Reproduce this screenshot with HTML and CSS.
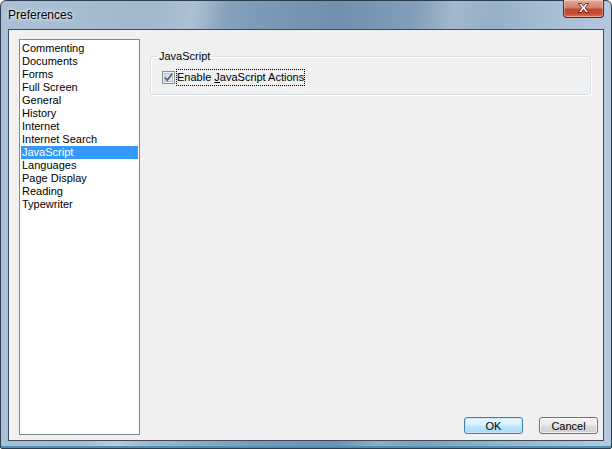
FILE: index.html
```html
<!DOCTYPE html>
<html>
<head>
<meta charset="utf-8">
<link rel="stylesheet" href="styles.css">
</head>
<body>
<div class="window">
  <div class="titlebar">
    <span class="title">Preferences</span>
    <div class="close">
      <svg width="41" height="18" viewBox="0 0 41 18">
        <path d="M15.5 4.5 L18.5 4.5 L20.5 7.2 L22.5 4.5 L25.5 4.5 L22.2 8.8 L25.8 13.5 L22.8 13.5 L20.5 10.4 L18.2 13.5 L15.2 13.5 L18.8 8.8 Z" fill="#ffffff" stroke="#5a1a12" stroke-width="0.9"/>
      </svg>
    </div>
  </div>
  <div class="client">
    <ul class="list">
      <li>Commenting</li>
      <li>Documents</li>
      <li>Forms</li>
      <li>Full Screen</li>
      <li>General</li>
      <li>History</li>
      <li>Internet</li>
      <li>Internet Search</li>
      <li class="sel">JavaScript</li>
      <li>Languages</li>
      <li>Page Display</li>
      <li>Reading</li>
      <li>Typewriter</li>
    </ul>
    <div class="pane">
      <fieldset class="group">
        <legend>JavaScript</legend>
        <div class="check-row">
          <span class="box">
            <svg width="13" height="13" viewBox="0 0 13 13">
              <rect x="0.5" y="0.5" width="12" height="12" fill="#f4f4f4" stroke="#8e8f8f"/>
              <rect x="2.5" y="2.5" width="8" height="8" fill="#dfe3e8" stroke="#b9c1cc"/>
              <path d="M3 6.5 L5.3 9.3 L10 2.8" fill="none" stroke="#3f5b85" stroke-width="1.6"/>
            </svg>
          </span>
          <span class="label">Enable <u>J</u>avaScript Actions</span>
        </div>
      </fieldset>
      <div class="buttons">
        <button class="btn default">OK</button>
        <button class="btn">Cancel</button>
      </div>
    </div>
  </div>
</div>
</body>
</html>
```
FILE: styles.css
```css
html, body {
  margin: 0;
  padding: 0;
  background: #ffffff;
}
.window {
  width: 612px;
  height: 449px;
  box-sizing: border-box;
  display: flex;
  flex-direction: column;
  padding: 0 7px 7px 7px;
  border: 1px solid #2c3e50;
  border-radius: 6px 6px 2px 2px;
  background:
    linear-gradient(100deg, rgba(255,255,255,0) 22%, rgba(255,255,255,0.25) 28%, rgba(255,255,255,0) 33%, rgba(255,255,255,0) 60%, rgba(255,255,255,0.2) 66%, rgba(255,255,255,0) 72%),
    linear-gradient(90deg, #abc0d4 0%, #a0b7cc 25%, #7f9cb9 40%, #7190af 55%, #84a0bc 70%, #a6bed3 90%, #b4c9dd 100%);
  box-shadow: inset 0 -2px 0 #4b93b3;
  font-family: "Liberation Sans", Arial, sans-serif;
}
.titlebar {
  height: 28px;
  position: relative;
  display: flex;
  align-items: center;
}
.title {
  font-size: 12px;
  color: #000;
  margin-top: 0px;
  text-shadow: 0 0 6px rgba(255,255,255,0.9), 0 0 3px rgba(255,255,255,0.8);
}
.close {
  position: absolute;
  right: 0px;
  top: -1px;
  width: 41px;
  height: 18px;
  box-sizing: border-box;
  border: 1px solid #4a2a2a;
  border-top: none;
  border-radius: 0 0 4px 4px;
  background: linear-gradient(180deg, #e6a898 0%, #d4806c 45%, #c0462c 55%, #c94b2e 80%, #e07a5a 100%);
  box-shadow: inset 0 0 0 1px rgba(255,255,255,0.35);
}
.close svg {
  position: absolute;
  left: -1px;
  top: -1px;
}
.client {
  flex: 1;
  display: flex;
  background: #f0f0f0;
  border: 1px solid #3a4b5c;
  padding: 9px 5px 5px 10px;
}
.list {
  list-style: none;
  margin: 0;
  padding: 2px 1px;
  width: 117px;
  background: #ffffff;
  border: 1px solid #828790;
  font-size: 11px;
  color: #000;
}
.list li {
  height: 13px;
  line-height: 13px;
  padding-left: 1px;
  white-space: nowrap;
}
.list li.sel {
  background: #3399ff;
  color: #ffffff;
}
.pane {
  flex: 1;
  display: flex;
  flex-direction: column;
  padding-left: 10px;
}
.group {
  margin: 11px 7px 0 0;
  padding: 0 0 8px 11px;
  border: 1px solid #d5dfe5;
  border-radius: 3px;
  font-size: 11px;
  box-shadow: 1px 1px 0 #ffffff inset, 1px 1px 0 #ffffff;
}
.group legend {
  padding: 0 2px;
  margin-left: -5px;
  color: #000;
}
.check-row {
  display: flex;
  align-items: center;
  margin-top: 7px;
}
.box {
  width: 13px;
  height: 13px;
  display: block;
}
.box svg {
  display: block;
}
.label {
  margin-left: 1px;
  padding: 2px 1px;
  outline: 1px dotted #000;
  outline-offset: -1px;
  line-height: 13px;
}
.buttons {
  margin-top: auto;
  display: flex;
  justify-content: flex-end;
  gap: 16px;
  padding-bottom: 1px;
}
.btn {
  width: 59px;
  height: 17px;
  padding: 0;
  font-family: "Liberation Sans", Arial, sans-serif;
  font-size: 11px;
  color: #000;
  border: 1px solid #707070;
  border-radius: 3px;
  background: linear-gradient(180deg, #f2f2f2 0%, #ebebeb 48%, #dddddd 52%, #cfcfcf 100%);
  box-shadow: inset 0 0 0 1px rgba(255,255,255,0.7);
}
.btn.default {
  border-color: #3c7fb1;
  background: linear-gradient(180deg, #eaf6fd 0%, #d9f0fc 48%, #bee6fd 52%, #a7d9f5 100%);
  box-shadow: inset 0 0 0 1px #c8e6f8;
}
```
